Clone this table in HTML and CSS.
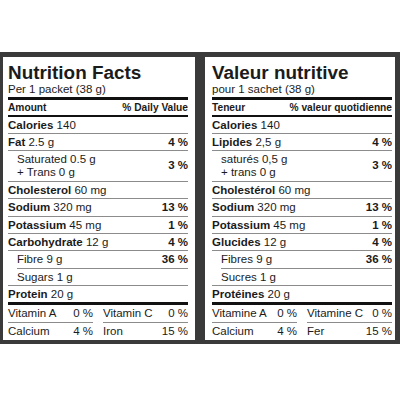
FILE: index.html
```html
<!DOCTYPE html>
<html lang="en">

<head>
  <meta charset="utf-8">
  <meta name="viewport" content="width=device-width, initial-scale=1">
  <title>Nutrition Facts / Valeur nutritive</title>
  <link rel="stylesheet" href="styles.css">
</head>

<body>
  <div class="labels">
    <!-- English -->
    <section class="panel panel-left">
      <h1 class="title">Nutrition Facts</h1>
      <p class="serving">Per 1 packet (38 g)</p>
      <div class="row head"><span>Amount</span><span>% Daily Value</span></div>
      <div class="row"><span><b>Calories</b> 140</span></div>
      <div class="row"><span><b>Fat</b> 2.5 g</span><b>4 %</b></div>
      <div class="row double sub"><span>Saturated 0.5 g<br>+ Trans 0 g</span><b>3 %</b></div>
      <div class="row"><span><b>Cholesterol</b> 60 mg</span></div>
      <div class="row"><span><b>Sodium</b> 320 mg</span><b>13 %</b></div>
      <div class="row"><span><b>Potassium</b> 45 mg</span><b>1 %</b></div>
      <div class="row"><span><b>Carbohydrate</b> 12 g</span><b>4 %</b></div>
      <div class="row indent"><span>Fibre 9 g</span><b>36 %</b></div>
      <div class="row sub"><span>Sugars 1 g</span></div>
      <div class="row thick"><span><b>Protein</b> 20 g</span></div>
      <div class="vitamins">
        <div class="vit"><span>Vitamin A</span><span>0 %</span></div>
        <div class="vit"><span>Vitamin C</span><span>0 %</span></div>
        <div class="vit last"><span>Calcium</span><span>4 %</span></div>
        <div class="vit last"><span>Iron</span><span>15 %</span></div>
      </div>
    </section>
    <!-- Français -->
    <section class="panel panel-right">
      <h1 class="title">Valeur nutritive</h1>
      <p class="serving">pour 1 sachet (38 g)</p>
      <div class="row head"><span>Teneur</span><span>% valeur quotidienne</span></div>
      <div class="row"><span><b>Calories</b> 140</span></div>
      <div class="row"><span><b>Lipides</b> 2,5 g</span><b>4 %</b></div>
      <div class="row double sub"><span>saturés 0,5 g<br>+ trans 0 g</span><b>3 %</b></div>
      <div class="row"><span><b>Cholestérol</b> 60 mg</span></div>
      <div class="row"><span><b>Sodium</b> 320 mg</span><b>13 %</b></div>
      <div class="row"><span><b>Potassium</b> 45 mg</span><b>1 %</b></div>
      <div class="row"><span><b>Glucides</b> 12 g</span><b>4 %</b></div>
      <div class="row indent"><span>Fibres 9 g</span><b>36 %</b></div>
      <div class="row sub"><span>Sucres 1 g</span></div>
      <div class="row thick"><span><b>Protéines</b> 20 g</span></div>
      <div class="vitamins">
        <div class="vit"><span>Vitamine A</span><span>0 %</span></div>
        <div class="vit"><span>Vitamine C</span><span>0 %</span></div>
        <div class="vit last"><span>Calcium</span><span>4 %</span></div>
        <div class="vit last"><span>Fer</span><span>15 %</span></div>
      </div>
    </section>
  </div>
</body>

</html>
```

FILE: styles.css
```css
* {
  padding: 0;
  margin: 0;
  box-sizing: border-box;
}

body {
  background-color: #fff;
  color: #1b1b1b;
  font-family: "Liberation Sans", Arial, sans-serif;
}

.labels {
  display: flex;
  width: 400px;
  margin-top: 52px;
}

/* 面板 */
.panel {
  width: 200px;
  background-color: #fff;
  border: 5px solid #3a3a3a;
  border-bottom-width: 4px;
}

.panel-left {
  border-left-width: 3px;
  padding: 0 7px 0 5px;
}

.panel-right {
  padding: 0 3px 0 7px;
}

.title {
  font-size: 18.9px;
  line-height: 20px;
  font-weight: 700;
  padding-top: 5.6px;
}

.serving {
  font-size: 11.5px;
  line-height: 13px;
  padding-bottom: 1px;
  border-bottom: 3px solid #111;
}

/* 行 */
.row {
  display: flex;
  justify-content: space-between;
  align-items: center;
  height: 17.3px;
  font-size: 11.5px;
  line-height: 16.3px;
  border-bottom: 1px solid #8c8c8c;
}

.row b {
  font-weight: 700;
}

.row.head {
  height: 17px;
  font-size: 10.2px;
  font-weight: 700;
  line-height: 15px;
  padding-top: 1px;
  border-bottom: 2px solid #111;
}

.row.double {
  height: 31px;
  line-height: 13.5px;
}

.row.sub {
  padding-left: 9px;
}

.row.indent {
  margin-left: 9px;
}

.row.thick {
  height: 19.3px;
  border-bottom: 3px solid #111;
}

/* 维生素 */
.vitamins {
  display: grid;
  grid-template-columns: 1fr 1fr;
  column-gap: 10px;
}

.vit {
  display: flex;
  justify-content: space-between;
  height: 17.3px;
  font-size: 11.5px;
  line-height: 16.3px;
  border-bottom: 1px solid #8c8c8c;
}

.vit.last {
  height: 17px;
  border-bottom: none;
}
```
